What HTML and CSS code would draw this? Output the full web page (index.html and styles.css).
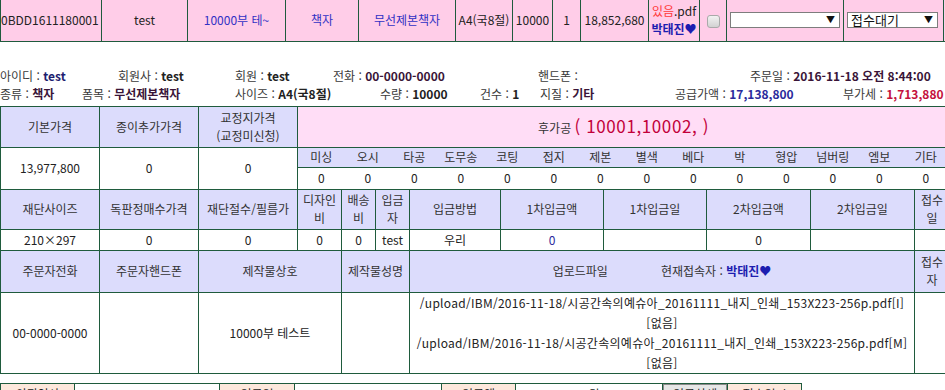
FILE: index.html
```html
<!DOCTYPE html>
<html lang="ko">
<head>
<meta charset="utf-8">
<title>주문상세</title>
<link rel="stylesheet" href="styles.css">
</head>
<body>
<div class="page">
  <table class="list">
    <colgroup>
      <col class="w101"><col class="w86"><col class="w98"><col class="w73"><col class="w97"><col class="w57"><col class="w40"><col class="w28"><col class="w68"><col class="w51"><col class="w27"><col class="w117"><col class="w100"><col class="w60">
    </colgroup>
    <tr>
      <td class="no">0BDD1611180001</td>
      <td>test</td>
      <td class="link">10000부 테~</td>
      <td class="link">책자</td>
      <td class="link">무선제본책자</td>
      <td>A4(국8절)</td>
      <td>10000</td>
      <td>1</td>
      <td>18,852,680</td>
      <td class="file"><span class="red">있음</span>.pdf<br><b class="staff">박태진♥</b></td>
      <td><span class="chk"></span></td>
      <td class="selcell"><div class="sel sel1"><span></span><i>▼</i></div></td>
      <td class="selcell"><div class="sel sel2"><span>접수대기</span><i>▼</i></div></td>
      <td></td>
    </tr>
  </table>

  <div class="info">
    <div class="line line1">
      <span>아이디 : <b class="navy">test</b></span>
      <span>회원사 : <b>test</b></span>
      <span>회원 : <b>test</b></span>
      <span>전화 : <b class="plum">00-0000-0000</b></span>
      <span>핸드폰 : </span>
      <span>주문일 : <b class="plum">2016-11-18 오전 8:44:00</b></span>
    </div>
    <div class="line line2">
      <span>종류 : <b class="plum">책자</b></span>
      <span>폼목 : <b class="plum">무선제본책자</b></span>
      <span>사이즈 : <b>A4(국8절)</b></span>
      <span>수량 : <b>10000</b></span>
      <span>건수 : <b>1</b></span>
      <span>지질 : <b class="plum">기타</b></span>
      <span>공급가액 : <b class="blue">17,138,800</b></span>
      <span>부가세 : <b class="crimson">1,713,880</b></span>
    </div>
  </div>

  <table class="main">
    <colgroup>
      <col class="w99"><col class="w99"><col class="w99"><col class="w44"><col class="w34"><col class="w34"><col class="w91"><col class="w103"><col class="w103"><col class="w104"><col class="w104"><col class="w35">
    </colgroup>
    <tr class="r1">
      <td class="hd">기본가격</td>
      <td class="hd">종이추가가격</td>
      <td class="hd">교정지가격<br>(교정미신청)</td>
      <td class="pink" colspan="9">후가공 <span class="codes">( 10001,10002, )</span></td>
    </tr>
    <tr class="r2">
      <td>13,977,800</td>
      <td>0</td>
      <td>0</td>
      <td class="nest" colspan="9">
        <table class="sub">
          <tr class="subhd">
            <td>미싱</td><td>오시</td><td>타공</td><td>도무송</td><td>코팅</td><td>접지</td><td>제본</td><td>별색</td><td>베다</td><td>박</td><td>형압</td><td>넘버링</td><td>엠보</td><td>기타</td>
          </tr>
          <tr class="subval">
            <td>0</td><td>0</td><td>0</td><td>0</td><td>0</td><td>0</td><td>0</td><td>0</td><td>0</td><td>0</td><td>0</td><td>0</td><td>0</td><td>0</td>
          </tr>
        </table>
      </td>
    </tr>
    <tr class="r3">
      <td class="hd">재단사이즈</td>
      <td class="hd">독판정매수가격</td>
      <td class="hd">재단절수/필름가</td>
      <td class="hd">디자인<br>비</td>
      <td class="hd">배송<br>비</td>
      <td class="hd">입금<br>자</td>
      <td class="hd">입금방법</td>
      <td class="hd">1차입금액</td>
      <td class="hd">1차입금일</td>
      <td class="hd">2차입금액</td>
      <td class="hd">2차입금일</td>
      <td class="hd">접수<br>일</td>
    </tr>
    <tr class="r4">
      <td>210×297</td>
      <td>0</td>
      <td>0</td>
      <td>0</td>
      <td>0</td>
      <td>test</td>
      <td>우리</td>
      <td class="blue">0</td>
      <td></td>
      <td>0</td>
      <td></td>
      <td></td>
    </tr>
    <tr class="r5">
      <td class="hd">주문자전화</td>
      <td class="hd">주문자핸드폰</td>
      <td class="hd" colspan="2">제작물상호</td>
      <td class="hd" colspan="2">제작물성명</td>
      <td class="hd" colspan="5">업로드파일<span class="viewer">현재접속자 : <b class="staff">박태진♥</b></span></td>
      <td class="hd">접수<br>자</td>
    </tr>
    <tr class="r6">
      <td>00-0000-0000</td>
      <td></td>
      <td colspan="2">10000부 테스트</td>
      <td colspan="2"></td>
      <td colspan="5" class="files">
        <div>/upload/IBM/2016-11-18/시공간속의예슈아_20161111_내지_인쇄_153X223-256p.pdf[I]</div>
        <div>[없음]</div>
        <div>/upload/IBM/2016-11-18/시공간속의예슈아_20161111_내지_인쇄_153X223-256p.pdf[M]</div>
        <div>[없음]</div>
      </td>
      <td></td>
    </tr>
  </table>

  <table class="foot">
    <colgroup>
      <col class="w74"><col class="w145"><col class="w75"><col class="w147"><col class="w74"><col class="w147"><col class="w65"><col class="w74">
    </colgroup>
    <tr>
      <td class="peach">의뢰인사</td>
      <td></td>
      <td class="peach">입금일</td>
      <td></td>
      <td class="peach">입금액</td>
      <td>0 원</td>
      <td class="btncell"><span class="btn">입금상세</span></td>
      <td class="peach">접수일시</td>
    </tr>
  </table>
</div>
</body>
</html>
```

FILE: styles.css
```css
* { box-sizing: border-box; }
html, body { margin: 0; padding: 0; overflow: hidden; background: #fff; }
body {
  font-family: "Noto Sans CJK KR", "Noto Sans", sans-serif;
  font-size: 12px;
  color: #222;
}
.page { width: 945px; height: 390px; overflow: hidden; }

table { border-collapse: collapse; table-layout: fixed; }
td { padding: 0; text-align: center; vertical-align: middle; line-height: 18px; white-space: nowrap; }

/* column widths */
.w27 { width: 27px; } .w28 { width: 28px; } .w34 { width: 34px; } .w35 { width: 35px; }
.w40 { width: 40px; } .w44 { width: 44px; } .w51 { width: 51px; } .w57 { width: 57px; }
.w60 { width: 60px; } .w65 { width: 65px; } .w68 { width: 68px; } .w73 { width: 73px; }
.w74 { width: 74px; } .w75 { width: 75px; } .w86 { width: 86px; } .w91 { width: 91px; }
.w97 { width: 97px; } .w98 { width: 98px; } .w99 { width: 99px; } .w100 { width: 100px; }
.w101 { width: 101px; } .w103 { width: 103px; } .w104 { width: 104px; } .w117 { width: 117px; }
.w145 { width: 145px; } .w147 { width: 147px; }

/* top list row */
.list { width: 1003px; background: #ffcde8; }
.list td { height: 41px; border: 1px solid #1f5b3d; border-top: none; color: #222; }
.list td.no { text-align: right; padding-right: 4px; }
.list td.link { color: #3131c4; }
.red { color: #ff3a3a; }
.staff { color: #1d1db0; font-weight: bold; }
.chk {
  display: inline-block; width: 13px; height: 13px; vertical-align: middle;
  border: 1px solid #a9a9a9; border-radius: 3px;
  background: linear-gradient(#f2f2f2, #d2d2d2);
}
.list td.selcell { text-align: left; padding-left: 3px; }
.sel {
  display: flex; align-items: center; justify-content: space-between;
  height: 16px; background: #fff; border: 1px solid #7d7d7d;
  padding: 0 4px 0 3px; color: #111; font-size: 13px; line-height: 14px;
}
.sel1 { width: 110px; }
.sel2 { width: 91px; }
.sel i { font-style: normal; font-size: 9px; color: #111; }

/* info lines */
.info { margin-top: 25px; margin-bottom: 3px; color: #3a3a3a; }
.line { display: grid; height: 18px; line-height: 18px; white-space: nowrap; }
.line1 { grid-template-columns: 118px 117px 98px 205px 212px auto; }
.line2 { grid-template-columns: 82px 153px 145px 100px 60px 135px 168px auto; }
.line b { color: #222; }
.line b.navy { color: #1e1e70; }
.line b.plum { color: #3a1538; }
.line b.blue { color: #2a2a9c; }
.line b.crimson { color: #c4103c; }

/* main detail table */
.main { width: 950px; }
.main > tbody > tr > td { border: 1px solid #1f5b3d; }
.main > tbody > .r1 > td { height: 41px; }
.main > tbody > .r2 > td { height: 42px; }
.main > tbody > .r3 > td { height: 40px; }
.main > tbody > .r4 > td { height: 21px; }
.main > tbody > .r5 > td { height: 42px; }
.main > tbody > .r6 > td { height: 81px; }
.hd { background: #dcdcfc; color: #333; }
.pink { background: #ffddf6; color: #333; }
.codes { color: #c2003a; font-size: 17px; letter-spacing: 0.6px; }
.blue { color: #2a2a9c; }
.main td.nest { padding: 0; vertical-align: top; }
.sub { width: 100%; }
.sub td { border: none; height: 20px; line-height: 18px; }
.sub .subhd td { background: #dcdcfc; border-bottom: 1px solid #1f5b3d; color: #333; }
.sub .subval td { height: 21px; }
.viewer { margin-left: 53px; }
.files { letter-spacing: 0.28px; }
.files div { height: 20px; line-height: 20px; }

/* footer row */
.foot { width: 802px; margin-top: 9px; }
.foot td { height: 22px; border: 1px solid #1f5b3d; }
.peach { background: #fde8dc; }
.btncell { padding: 0; }
.btn {
  display: block; height: 20px; line-height: 18px;
  background: #e6e6e6; border: 1px solid #8a8a8a;
}
```
